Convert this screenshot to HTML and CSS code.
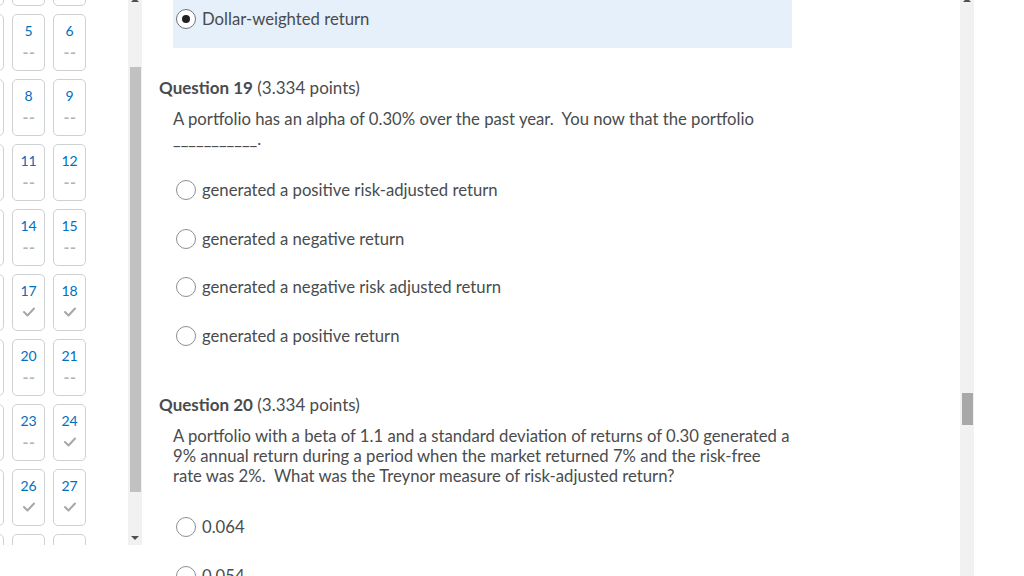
FILE: index.html
```html
<!DOCTYPE html>
<html lang="en">
<head>
<meta charset="utf-8">
<title>Quiz</title>
<link rel="stylesheet" href="styles.css">
</head>
<body>
<div class="page">
  <aside class="nav">
    <div class="tiles-viewport">
      <div class="tiles">
        <div class="tile"><span class="num">1</span><span class="mark dash">--</span></div>
        <div class="tile"><span class="num">2</span><span class="mark dash">--</span></div>
        <div class="tile"><span class="num">3</span><span class="mark dash">--</span></div>
        <div class="tile"><span class="num">4</span><span class="mark dash">--</span></div>
        <div class="tile"><span class="num">5</span><span class="mark dash">--</span></div>
        <div class="tile"><span class="num">6</span><span class="mark dash">--</span></div>
        <div class="tile"><span class="num">7</span><span class="mark dash">--</span></div>
        <div class="tile"><span class="num">8</span><span class="mark dash">--</span></div>
        <div class="tile"><span class="num">9</span><span class="mark dash">--</span></div>
        <div class="tile"><span class="num">10</span><span class="mark dash">--</span></div>
        <div class="tile"><span class="num">11</span><span class="mark dash">--</span></div>
        <div class="tile"><span class="num">12</span><span class="mark dash">--</span></div>
        <div class="tile"><span class="num">13</span><span class="mark dash">--</span></div>
        <div class="tile"><span class="num">14</span><span class="mark dash">--</span></div>
        <div class="tile"><span class="num">15</span><span class="mark dash">--</span></div>
        <div class="tile"><span class="num">16</span><span class="mark dash">--</span></div>
        <div class="tile"><span class="num">17</span><span class="mark"><svg class="check" viewBox="0 0 12 10" width="12" height="10"><polyline points="1,5 4.5,8.5 11,1.5"/></svg></span></div>
        <div class="tile"><span class="num">18</span><span class="mark"><svg class="check" viewBox="0 0 12 10" width="12" height="10"><polyline points="1,5 4.5,8.5 11,1.5"/></svg></span></div>
        <div class="tile"><span class="num">19</span><span class="mark dash">--</span></div>
        <div class="tile"><span class="num">20</span><span class="mark dash">--</span></div>
        <div class="tile"><span class="num">21</span><span class="mark dash">--</span></div>
        <div class="tile"><span class="num">22</span><span class="mark dash">--</span></div>
        <div class="tile"><span class="num">23</span><span class="mark dash">--</span></div>
        <div class="tile"><span class="num">24</span><span class="mark"><svg class="check" viewBox="0 0 12 10" width="12" height="10"><polyline points="1,5 4.5,8.5 11,1.5"/></svg></span></div>
        <div class="tile"><span class="num">25</span><span class="mark dash">--</span></div>
        <div class="tile"><span class="num">26</span><span class="mark"><svg class="check" viewBox="0 0 12 10" width="12" height="10"><polyline points="1,5 4.5,8.5 11,1.5"/></svg></span></div>
        <div class="tile"><span class="num">27</span><span class="mark"><svg class="check" viewBox="0 0 12 10" width="12" height="10"><polyline points="1,5 4.5,8.5 11,1.5"/></svg></span></div>
        <div class="tile"><span class="num">28</span><span class="mark dash">--</span></div>
        <div class="tile"><span class="num">29</span><span class="mark dash">--</span></div>
        <div class="tile"><span class="num">30</span><span class="mark dash">--</span></div>
      </div>
    </div>
    <div class="scrollbar nav-scroll">
      <span class="arrow up"></span>
      <span class="thumb nav-thumb"></span>
      <span class="arrow down"></span>
    </div>
  </aside>

  <main class="content">
    <div class="answer selected first">
      <span class="radio checked"></span>
      <span class="label">Dollar-weighted return</span>
    </div>

    <section class="question q19">
      <h2 class="q-title"><strong>Question 19</strong> (3.334 points)</h2>
      <div class="q-body">
        <p class="q-text">A portfolio has an alpha of 0.30% over the past year.&nbsp; You now that the portfolio ___________.</p>
        <div class="answers">
          <div class="answer"><span class="radio"></span><span class="label">generated a positive risk-adjusted return</span></div>
          <div class="answer"><span class="radio"></span><span class="label">generated a negative return</span></div>
          <div class="answer"><span class="radio"></span><span class="label">generated a negative risk adjusted return</span></div>
          <div class="answer"><span class="radio"></span><span class="label">generated a positive return</span></div>
        </div>
      </div>
    </section>

    <section class="question q20">
      <h2 class="q-title"><strong>Question 20</strong> (3.334 points)</h2>
      <div class="q-body">
        <p class="q-text">A portfolio with a beta of 1.1 and a standard deviation of returns of 0.30 generated a 9% annual return during a period when the market returned 7% and the risk-free rate was 2%.&nbsp; What was the Treynor measure of risk-adjusted return?</p>
        <div class="answers">
          <div class="answer"><span class="radio"></span><span class="label">0.064</span></div>
          <div class="answer"><span class="radio"></span><span class="label">0.054</span></div>
        </div>
      </div>
    </section>
  </main>

  <div class="scrollbar page-scroll">
    <span class="arrow up"></span>
    <span class="thumb page-thumb"></span>
  </div>
  <div class="gutter"></div>
</div>
</body>
</html>
```

FILE: styles.css
```css
* { box-sizing: border-box; }

html, body {
  margin: 0;
  padding: 0;
  width: 1024px;
  height: 576px;
  overflow: hidden;
  background: #ffffff;
  font-family: Lato, "Open Sans", "Liberation Sans", sans-serif;
  color: #494c4e;
}

.page {
  display: flex;
  align-items: flex-start;
  width: 1024px;
  height: 576px;
  overflow: hidden;
}

/* ---------- left navigation ---------- */
.nav {
  display: flex;
  width: 143px;
  height: 545px;
  flex: none;
  overflow: hidden;
}

.tiles-viewport {
  width: 128px;
  height: 545px;
  overflow: hidden;
  flex: none;
}

.tiles {
  display: grid;
  grid-template-columns: repeat(3, 33px);
  grid-auto-rows: 57px;
  column-gap: 8px;
  row-gap: 8px;
  margin-left: -29px;
  margin-top: -51px;
}

.tile {
  border: 1px solid #cdd1d4;
  border-radius: 5px;
  display: flex;
  flex-direction: column;
  align-items: center;
  background: #fff;
}

.num {
  display: block;
  padding-top: 8px;
  line-height: 16px;
  font-size: 14px;
  color: #006fbf;
}

.mark {
  display: flex;
  align-items: center;
  justify-content: center;
  height: 16px;
  margin-top: 5px;
}

.dash {
  font-size: 16px;
  line-height: 16px;
  color: #b1b5b8;
  letter-spacing: 0.5px;
  padding-left: 1px;
  font-weight: 700;
}

.check polyline {
  fill: none;
  stroke: #a3a8ab;
  stroke-width: 2;
  stroke-linecap: round;
  stroke-linejoin: round;
}

/* ---------- scrollbars ---------- */
.scrollbar {
  display: flex;
  flex-direction: column;
  align-items: center;
  width: 14px;
  flex: none;
  background: #f1f1f1;
}

.nav-scroll { height: 545px; }
.page-scroll { height: 576px; }

.arrow {
  display: block;
  width: 0;
  height: 0;
  border-left: 4px solid transparent;
  border-right: 4px solid transparent;
}

.arrow.up {
  border-bottom: 4px solid #505050;
  margin-top: -2px;
}

.arrow.down {
  border-top: 4px solid #505050;
  margin-top: 44px;
}

.thumb {
  display: block;
  width: 11px;
  margin-left: 1px;
}

.nav-thumb {
  background: #c1c1c1;
  height: 425px;
  margin-top: 65px;
}

.page-thumb {
  background: #a8a8a8;
  height: 32px;
  margin-top: 391px;
}

.gutter {
  flex: 1;
  height: 576px;
  background: #fff;
}

/* ---------- main content ---------- */
.content {
  width: 817px;
  flex: none;
  height: 576px;
  overflow: hidden;
  padding-left: 16px;
  font-size: 16.7px;
  line-height: 20px;
}

.answer {
  display: flex;
  align-items: center;
  height: 48.67px;
  padding-left: 3px;
}

.answer.selected {
  background: #e6f0fa;
  margin-left: 14px;
  width: 619px;
  height: 58px;
  margin-top: -10px;
  padding-top: 9px;
  padding-bottom: 9px;
  align-items: center;
}

.radio {
  display: inline-block;
  width: 20px;
  height: 20px;
  border: 1px solid #8a9094;
  border-radius: 50%;
  background: #fff;
  flex: none;
  position: relative;
}

.radio.checked {
  border-color: #6e7376;
}

.radio.checked::after {
  content: "";
  position: absolute;
  left: 5px;
  top: 5px;
  width: 8px;
  height: 8px;
  border-radius: 50%;
  background: #202122;
}

.label {
  margin-left: 6px;
  white-space: nowrap;
}

.question { margin-top: 30px; }
.q20 { margin-top: 34.67px; }

.q-title {
  margin: 0;
  font-size: 17px;
  line-height: 20px;
  font-weight: 400;
}

.q-title strong { font-weight: 700; }

.q-body {
  margin-left: 14px;
  margin-top: 11px;
}

.q-text {
  margin: 0;
  width: 619px;
}

.answers { margin-top: 16.67px; }
```
